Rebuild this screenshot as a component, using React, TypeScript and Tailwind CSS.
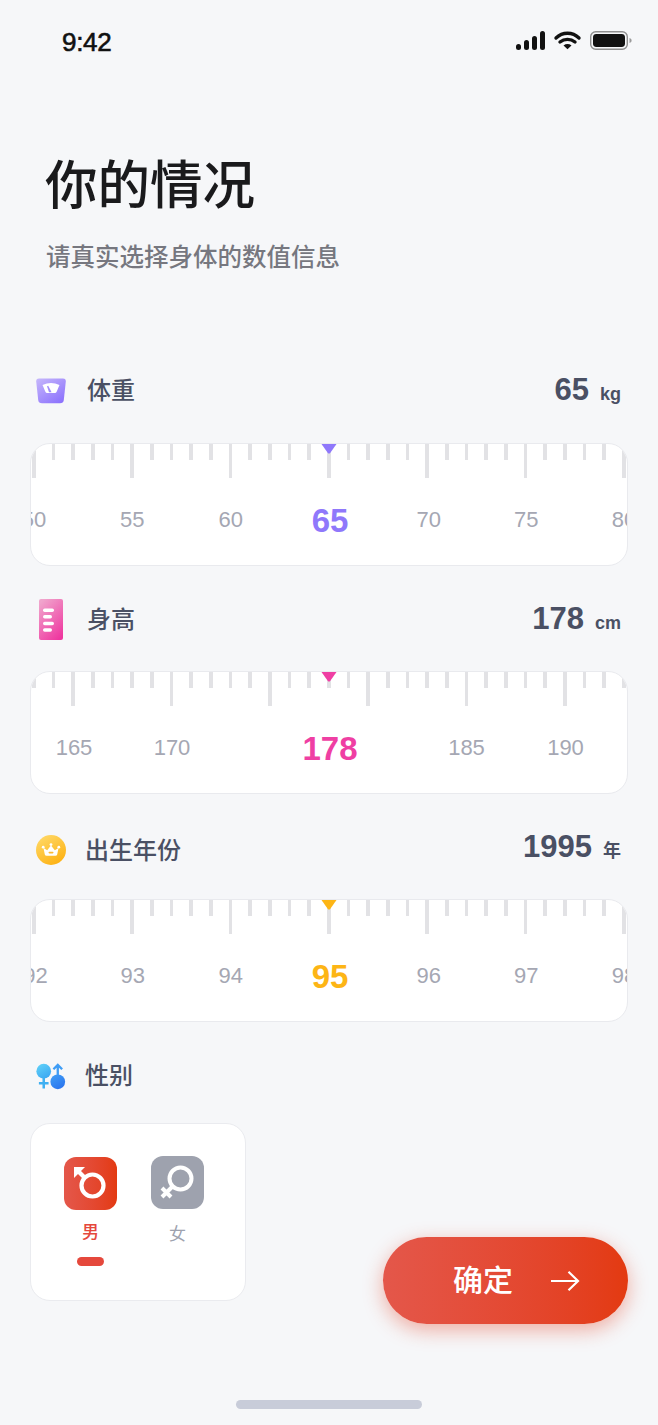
import React from "react";

const ticks = Array.from({ length: 31 }, (_, i) => i);

type Label = { t: string; w: string; on?: boolean };

function Ruler({ majorOffset, labels, tri, active, pad }: { majorOffset: number; labels: Label[]; tri: string; active: string; pad: string }) {
  return (
    <div className="relative h-[123px] rounded-[20px] border border-[#e9eaee] bg-white overflow-hidden">
      <div className="flex justify-between items-start px-[1px] h-[34px]">
        {ticks.map((i) => (
          <div key={i} className={(i % 5 === majorOffset ? "h-[34px]" : "h-[16px]") + " w-[3.5px] shrink-0 bg-[#e2e2e5]"} />
        ))}
      </div>
      <div className={"flex mt-[22px] h-[40px] items-center " + pad}>
        {labels.map((l, i) => (
          <div key={i} className={l.w + " shrink-0 text-center " + (l.on ? "text-[33px] font-bold leading-[40px] pt-[1px] pl-[2px] " + active : "text-[22px] leading-[40px] text-[#a5a7b3]")}>
            {l.t}
          </div>
        ))}
      </div>
      <svg className="absolute left-1/2 -translate-x-1/2 top-0" width="16" height="10" viewBox="0 0 16 10">
        <path d="M0.5 0H15.5L9 9.2Q8 10 7 9.2Z" fill={tri} />
      </svg>
    </div>
  );
}

function Header({ icon, label, value, unit, className, labelClass = "ml-[21px]", valueClass = "pb-[2px]", numClass = "text-[31px]" }: { icon: React.ReactNode; label: string; value: string; unit: string; className: string; labelClass?: string; valueClass?: string; numClass?: string }) {
  return (
    <div className={"flex items-center justify-between h-[48px] pl-[6px] pr-[7px] " + className}>
      <div className="flex items-center">
        <div className="w-[30px] flex items-center justify-center">{icon}</div>
        <span className={"text-[24px] font-medium text-[#4a5064] leading-[48px] " + labelClass}>{label}</span>
      </div>
      <div className={"flex items-baseline text-[#4a5064] font-bold " + valueClass}>
        <span className={numClass}>{value}</span>
        <span className="ml-[11px] text-[18px]">{unit}</span>
      </div>
    </div>
  );
}

const w98 = "w-[98.33px]";
const w98r = "w-[98.33px] pl-[3px]";
const w98s = "w-[98.33px] pl-[1px]";

export default function App() {
  return (
    <div className="relative w-[658px] h-[1425px] bg-[#f6f7f9] overflow-hidden font-['Liberation_Sans','Noto_Sans_CJK_SC',sans-serif]">
      {/* status bar */}
      <div className="flex items-center justify-between h-[84px] pl-[62px] pr-[26px]">
        <span className="text-[26px] font-medium text-[#111] tracking-[-0.3px] [-webkit-text-stroke:0.6px_#111]">9:42</span>
        <svg className="-mt-[3px]" width="116" height="22" viewBox="0 0 116 22">
          <rect x="0" y="14" width="5" height="6" rx="2.5" fill="#111" />
          <rect x="8" y="10" width="5" height="10" rx="2.5" fill="#111" />
          <rect x="16" y="6" width="5" height="14" rx="2.5" fill="#111" />
          <rect x="24" y="1" width="5" height="19" rx="2.5" fill="#111" />
          <path d="M40 8C46.5 1.7 56.5 1.7 63 8" stroke="#111" strokeWidth="3.4" fill="none" strokeLinecap="round" />
          <path d="M44 12C48.3 8.5 54.7 8.5 59 12" stroke="#111" strokeWidth="3.4" fill="none" strokeLinecap="round" />
          <path d="M47.5 15.5L51.5 19.2L55.5 15.5C53 13.6 50 13.6 47.5 15.5Z" fill="#111" />
          <rect x="74.7" y="1.7" width="36.6" height="17.6" rx="5" fill="none" stroke="#8f8f8f" strokeWidth="1.4" />
          <rect x="77" y="4" width="32" height="13" rx="3.4" fill="#111" />
          <path d="M113.5 8V13C115 12.6 115.6 11.5 115.6 10.5C115.6 9.5 115 8.4 113.5 8Z" fill="#9a9a9a" />
        </svg>
      </div>

      {/* title */}
      <div className="pl-[45px] mt-[72px]">
        <h1 className="text-[52.5px] leading-[60px] font-medium text-[#1a1a1c]">你的情况</h1>
        <p className="mt-[27px] ml-[1px] text-[24.5px] leading-[30px] font-medium text-[#76777f]">请真实选择身体的数值信息</p>
      </div>

      <div className="px-[30px]">
        <Header
          className="mt-[94px]"
          label="体重"
          value="65"
          unit="kg"
          icon={
            <svg width="30" height="26" viewBox="0 0 30 26">
              <defs>
                <linearGradient id="sc" x1="0.1" y1="0" x2="0.9" y2="1">
                  <stop offset="0" stopColor="#c3b4fb" />
                  <stop offset="1" stopColor="#8a6ffd" />
                </linearGradient>
              </defs>
              <path d="M3 0.5H27Q30 0.5 29.8 3.5L27.8 22Q27.4 25.2 24 25.2H6Q2.6 25.2 2.2 22L0.2 3.5Q0 0.5 3 0.5Z" fill="url(#sc)" />
              <path d="M6.5 7Q15 3 23.5 7L20.5 14Q20 15 19 15H11Q10 15 9.5 14Z" fill="#fff" />
              <path d="M12.2 7.8L15.6 14.2H13L11 8.2Z" fill="#a08cfb" />
            </svg>
          }
        />
        <div className="mt-[28px]">
          <Ruler
            majorOffset={0}
            tri="#8f78fb"
            active="text-[#8f78fb]"
            pad="justify-center"
            labels={[
              { t: "50", w: w98 },
              { t: "55", w: w98 },
              { t: "60", w: w98 },
              { t: "65", w: w98, on: true },
              { t: "70", w: w98r },
              { t: "75", w: w98s },
              { t: "80", w: w98 },
            ]}
          />
        </div>

        <Header
          className="mt-[30px]"
          label="身高"
          value="178"
          unit="cm"
          icon={
            <svg className="-mt-[2px]" width="24" height="41" viewBox="0 0 24 41">
              <defs>
                <linearGradient id="rl" x1="0.2" y1="0" x2="0.8" y2="1">
                  <stop offset="0" stopColor="#f0a4cc" />
                  <stop offset="1" stopColor="#ef37a0" />
                </linearGradient>
              </defs>
              <rect width="24" height="41" rx="2" fill="url(#rl)" />
              <rect x="4" y="9.5" width="11" height="3.4" rx="1.7" fill="#fff" />
              <rect x="4" y="16" width="9" height="3.4" rx="1.7" fill="#fff" />
              <rect x="4" y="22.8" width="11" height="3.4" rx="1.7" fill="#fff" />
              <rect x="4" y="29.3" width="9" height="3.4" rx="1.7" fill="#fff" />
            </svg>
          }
        />
        <div className="mt-[27px]">
          <Ruler
            majorOffset={2}
            tri="#ef3fa3"
            active="text-[#ef3fa3]"
            pad="pl-[14px]"
            labels={[
              { t: "165", w: "w-[58px]" },
              { t: "170", w: "w-[138px]" },
              { t: "178", w: "w-[176px]", on: true },
              { t: "185", w: "w-[98px] pl-[1px]" },
              { t: "190", w: "w-[100px] pl-[1px]" },
            ]}
          />
        </div>

        <Header
          className="mt-[32px]"
          label="出生年份"
          labelClass="ml-[19px] pt-[2px]"
          value="1995"
          unit="年"
          valueClass="pb-[6px]"
          numClass="text-[31px]"
          icon={
            <svg width="30" height="30" viewBox="0 0 30 30">
              <defs>
                <linearGradient id="cr" x1="0.2" y1="0" x2="0.8" y2="1">
                  <stop offset="0" stopColor="#ffd866" />
                  <stop offset="1" stopColor="#fdb010" />
                </linearGradient>
              </defs>
              <circle cx="15" cy="15" r="15" fill="url(#cr)" />
              <path d="M7.5 13L11.2 15.3L15 10.5L18.8 15.3L22.5 13L21.2 19.5Q20.9 20.8 19.4 20.8H10.6Q9.1 20.8 8.8 19.5Z" fill="#fff" />
              <circle cx="7.2" cy="12.2" r="1.4" fill="#fff" />
              <circle cx="15" cy="9.6" r="1.4" fill="#fff" />
              <circle cx="22.8" cy="12.2" r="1.4" fill="#fff" />
              <rect x="12.5" y="16.8" width="5" height="1.6" rx="0.8" fill="#fdbb33" />
            </svg>
          }
        />
        <div className="mt-[25px]">
          <Ruler
            majorOffset={0}
            tri="#fdb515"
            active="text-[#fdb515]"
            pad="justify-center"
            labels={[
              { t: "92", w: "w-[98.33px] pl-[3px]" },
              { t: "93", w: w98s },
              { t: "94", w: w98 },
              { t: "95", w: w98, on: true },
              { t: "96", w: w98r },
              { t: "97", w: w98s },
              { t: "98", w: w98 },
            ]}
          />
        </div>

        <Header
          className="mt-[30px]"
          label="性别"
          labelClass="ml-[19px]"
          value=""
          unit=""
          icon={
            <svg width="31" height="27" viewBox="0 0 31 27">
              <defs>
                <linearGradient id="ga" x1="0.2" y1="0" x2="0.8" y2="1">
                  <stop offset="0" stopColor="#5fd0f8" />
                  <stop offset="1" stopColor="#3aa6f2" />
                </linearGradient>
                <linearGradient id="gb" x1="0.2" y1="0" x2="0.8" y2="1">
                  <stop offset="0" stopColor="#3f9df5" />
                  <stop offset="1" stopColor="#2a72ee" />
                </linearGradient>
              </defs>
              <circle cx="8" cy="8" r="7.6" fill="url(#ga)" />
              <path d="M8 14V26M3 20.5H13" stroke="#3fb0f2" strokeWidth="2.6" fill="none" />
              <circle cx="22.5" cy="19" r="7.6" fill="url(#gb)" />
              <path d="M22.5 12V2M18 6L22.5 1.5L27 6" stroke="#3f9df5" strokeWidth="2.4" fill="none" />
            </svg>
          }
        />

        <div className="flex items-start justify-between mt-[23px]">
          <div className="w-[216px] h-[178px] rounded-[20px] border border-[#eaebef] bg-white flex items-start pl-[33px] pt-[33px]">
            <div className="w-[53px] flex flex-col items-center">
              <div className="w-[53px] h-[53px] rounded-[12px] bg-gradient-to-r from-[#e4574a] to-[#e33a10] flex items-center justify-center">
                <svg width="53" height="53" viewBox="0 0 53 53">
                  <circle cx="28.5" cy="28.5" r="11" stroke="#fff" strokeWidth="4.2" fill="none" />
                  <path d="M21 21L13 13" stroke="#fff" strokeWidth="4.2" fill="none" />
                  <path d="M10 10H21L10 21Z" fill="#fff" />
                </svg>
              </div>
              <span className="mt-[9px] text-[17px] leading-[27px] font-medium text-[#e5483c]">男</span>
              <div className="mt-[11px] w-[27px] h-[9px] rounded-full bg-[#e5483c]" />
            </div>
            <div className="ml-[34px] -mt-[1px] w-[53px] flex flex-col items-center">
              <div className="w-[53px] h-[53px] rounded-[12px] bg-[#9ea2ae] flex items-center justify-center">
                <svg width="53" height="53" viewBox="0 0 53 53">
                  <circle cx="29.5" cy="22.5" r="11" stroke="#fff" strokeWidth="4" fill="none" />
                  <path d="M21.5 30.5L11 41M11 32L20 41" stroke="#fff" strokeWidth="4" fill="none" />
                </svg>
              </div>
              <span className="mt-[12px] text-[17px] leading-[27px] text-[#9ea2ae]">女</span>
            </div>
          </div>

          <button className="mt-[114px] w-[245px] h-[87px] rounded-full bg-gradient-to-r from-[#e4574a] to-[#e33a10] shadow-[0_6px_20px_rgba(228,60,30,0.4)] flex items-center pl-[70px]">
            <span className="text-[30px] font-medium text-white leading-[40px]">确定</span>
            <svg className="ml-[37px]" width="30" height="22" viewBox="0 0 30 22">
              <path d="M1 11H28M18.5 1.8L28 11L18.5 20.2" stroke="#fff" strokeWidth="2.2" fill="none" />
            </svg>
          </button>
        </div>
      </div>

      <div className="mt-[76px] mx-auto w-[186px] h-[9px] rounded-full bg-[#c8ccd9]" />
    </div>
  );
}
